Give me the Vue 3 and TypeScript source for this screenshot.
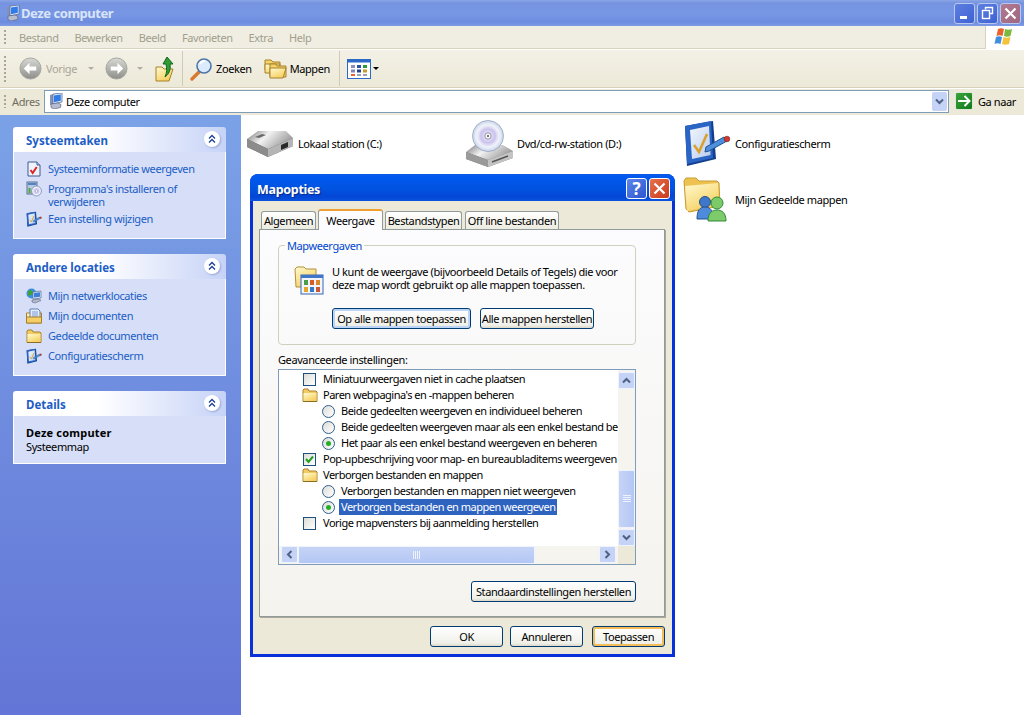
<script setup lang="ts">
interface Task {
  icon: string
  text: string
}

interface Row {
  kind: 'check' | 'radio' | 'folder'
  text: string
  on?: boolean
  selected?: boolean
}

const menus = ['Bestand', 'Bewerken', 'Beeld', 'Favorieten', 'Extra', 'Help']

const systemTasks: Task[] = [
  { icon: '#i-info', text: 'Systeeminformatie weergeven' },
  { icon: '#i-install', text: "Programma's installeren of verwijderen" },
  { icon: '#i-panel', text: 'Een instelling wijzigen' },
]

const otherPlaces: Task[] = [
  { icon: '#i-network', text: 'Mijn netwerklocaties' },
  { icon: '#i-docs', text: 'Mijn documenten' },
  { icon: '#i-folder', text: 'Gedeelde documenten' },
  { icon: '#i-panel', text: 'Configuratiescherm' },
]

const rows: Row[] = [
  { kind: 'check', text: 'Miniatuurweergaven niet in cache plaatsen' },
  { kind: 'folder', text: "Paren webpagina's en -mappen beheren" },
  { kind: 'radio', text: 'Beide gedeelten weergeven en individueel beheren' },
  { kind: 'radio', text: 'Beide gedeelten weergeven maar als een enkel bestand beheren' },
  { kind: 'radio', text: 'Het paar als een enkel bestand weergeven en beheren', on: true },
  { kind: 'check', text: 'Pop-upbeschrijving voor map- en bureaubladitems weergeven', on: true },
  { kind: 'folder', text: 'Verborgen bestanden en mappen' },
  { kind: 'radio', text: 'Verborgen bestanden en mappen niet weergeven' },
  { kind: 'radio', text: 'Verborgen bestanden en mappen weergeven', on: true, selected: true },
  { kind: 'check', text: 'Vorige mapvensters bij aanmelding herstellen' },
]

const tabs = ['Algemeen', 'Weergave', 'Bestandstypen', 'Off line bestanden']
</script>

<template>
  <div class="window">
    <svg class="defs" width="0" height="0">
      <defs>
        <linearGradient id="g-folder" x1="0" y1="0" x2="0.6" y2="1">
          <stop offset="0" stop-color="#fffad0" />
          <stop offset="1" stop-color="#f6d060" />
        </linearGradient>
        <linearGradient id="g-grey" x1="0" y1="0" x2="0" y2="1">
          <stop offset="0" stop-color="#d8d8d4" />
          <stop offset="1" stop-color="#8e8e8a" />
        </linearGradient>
        <linearGradient id="g-disk" x1="0" y1="0" x2="1" y2="0.4">
          <stop offset="0" stop-color="#777" />
          <stop offset="0.45" stop-color="#f2f2f2" />
          <stop offset="1" stop-color="#9c9c9c" />
        </linearGradient>
        <linearGradient id="g-pane" x1="0" y1="0" x2="1" y2="1">
          <stop offset="0" stop-color="#f2f6fd" />
          <stop offset="1" stop-color="#b9cdee" />
        </linearGradient>
        <radialGradient id="g-cd" cx="0.5" cy="0.5" r="0.55">
          <stop offset="0.1" stop-color="#f6ecf8" />
          <stop offset="0.4" stop-color="#c9c2ee" />
          <stop offset="0.65" stop-color="#f0f3f9" />
          <stop offset="1" stop-color="#bccbe6" />
        </radialGradient>
      </defs>
      <symbol id="i-monitor" viewBox="0 0 16 16">
        <path d="M2 2l3-1v10l-3 1z" fill="#8492bb" />
        <path d="M5 1l9-1v9l-9 2z" fill="#dfe9f8" stroke="#5a6d9a" stroke-width=".8" />
        <path d="M6 2.500l6.800-1v6.300L6 9.300z" fill="#2f7be8" />
        <path d="M3 11l7-1 3 1.500-.5 3L6 16l-3-1.500z" fill="#b7bdd0" stroke="#5d6685" stroke-width=".7" />
      </symbol>
      <symbol id="i-info" viewBox="0 0 16 16">
        <path d="M2 1h9l3 3v11H2z" fill="#eef3fb" stroke="#3f5a94" />
        <path d="M11 1v3h3" fill="#c6d4ec" stroke="#3f5a94" />
        <path d="M4.500 9l2.200 3 4-6" fill="none" stroke="#d8272a" stroke-width="2" />
      </symbol>
      <symbol id="i-install" viewBox="0 0 16 16">
        <rect x="1" y="1" width="10" height="12" fill="#b7c8df" stroke="#5d7192" />
        <rect x="2" y="2" width="8" height="2" fill="#4d84c9" />
        <rect x="2.500" y="7" width="2" height="5" fill="#46a83f" />
        <rect x="5" y="9" width="2" height="3" fill="#e2a72e" />
        <circle cx="10.500" cy="10" r="5" fill="url(#g-cd)" stroke="#7f88b8" stroke-width=".7" />
        <circle cx="10.500" cy="10" r="1.200" fill="#fff" stroke="#7f88b8" stroke-width=".5" />
      </symbol>
      <symbol id="i-panel" viewBox="0 0 48 48">
        <path d="M2 7l28-5 3 38-29 7z" fill="#123f8c" />
        <path d="M2 7l26-5 2 37-26 6z" fill="#2a64c4" />
        <path d="M7 11l19-4 1.500 29L9 40z" fill="url(#g-pane)" />
        <path d="M11 26l5 7 8-18" fill="none" stroke="#d9a02b" stroke-width="2.600" />
        <path d="M23 28l18-10 3 4-18 10-4 1z" fill="#4b8fdd" stroke="#23508f" />
        <circle cx="44" cy="20" r="2.800" fill="#cf3b2e" stroke="#7a1c14" stroke-width=".6" />
      </symbol>
      <symbol id="i-network" viewBox="0 0 16 16">
        <circle cx="5.500" cy="5.500" r="5" fill="#3f8fdd" />
        <path d="M2 3l4-1 1 3-3 3-2-1zM7 7l2 1-1 2-1-1z" fill="#3fa33a" />
        <path d="M7 4l8-1v7l-8 1z" fill="#dfe9f8" stroke="#5a6d9a" stroke-width=".7" />
        <path d="M8 5l6-.8v4.600L8 9.600z" fill="#3b7fd8" />
        <path d="M6 12l7-1 2 1.500-6 2.500-3-1z" fill="#b5bacb" stroke="#5d6685" stroke-width=".6" />
      </symbol>
      <symbol id="i-docs" viewBox="0 0 16 16">
        <path d="M.5 5h15v10H.5z" fill="url(#g-folder)" stroke="#a8802a" />
        <path d="M4 1h8l2 2v8H4z" fill="#e6eefb" stroke="#5f7fb5" />
        <path d="M6 4h6M6 6h6M6 8h6" stroke="#7c9ad0" />
        <path d="M.5 9h15v6H.5z" fill="#f5cf66" stroke="#a8802a" />
      </symbol>
      <symbol id="i-folder" viewBox="0 0 16 16">
        <path d="M1 4.500V3l1-1h4l1 2h7l1 1v9.500H1z" fill="#f2cc62" stroke="#a8802a" />
        <path d="M1.500 6h13v8h-13z" fill="url(#g-folder)" />
        <path d="M1 14.500h14" stroke="#8b6c22" />
      </symbol>
      <symbol id="i-up" viewBox="0 0 20 26">
        <path d="M1 11h6l2 2h9l-4 12H1z" fill="url(#g-folder)" stroke="#a8802a" />
        <path d="M12 1l6 7h-3c1 6-1 10-5 13 2-4 2-9 1-13H8z" fill="#2f9b32" stroke="#12681d" />
      </symbol>
      <symbol id="i-search" viewBox="0 0 24 24">
        <path d="M10 15L3 22" stroke="#d77a2b" stroke-width="3.400" stroke-linecap="round" />
        <circle cx="15" cy="9" r="7" fill="#dcebfb" stroke="#4f75a8" stroke-width="1.600" />
        <path d="M11 7a5 5 0 0 1 5-3" fill="none" stroke="#fff" stroke-width="2" />
      </symbol>
      <symbol id="i-folders" viewBox="0 0 24 20">
        <path d="M1 3V1h6l2 2h7v8H1z" fill="#f3d268" stroke="#a8802a" />
        <path d="M1 5h15l-2 9H1z" fill="url(#g-folder)" stroke="#a8802a" />
        <path d="M6 7V5h6l1 2h9v11H6z" fill="#f3d268" stroke="#a8802a" />
        <path d="M6 9h16l-3 10H6z" fill="url(#g-folder)" stroke="#a8802a" />
      </symbol>
    </svg>

    <header class="titlebar">
      <svg class="icon16"><use href="#i-monitor" /></svg>
      <span class="title">Deze computer</span>
      <div class="controls">
        <span class="ctl">
          <svg width="19" height="19" viewBox="0 0 19 19"><rect x="5" y="12" width="7" height="3" fill="#fff" /></svg>
        </span>
        <span class="ctl">
          <svg width="19" height="19" viewBox="0 0 19 19">
            <path d="M7.500 5.500V3.500h7v6h-2.500" fill="none" stroke="#fff" stroke-width="1.400" />
            <rect x="4.500" y="6.500" width="7" height="8" fill="none" stroke="#fff" stroke-width="1.400" />
          </svg>
        </span>
        <span class="ctl close">
          <svg width="19" height="19" viewBox="0 0 19 19"><path d="M4.500 4.500l10 10M14.500 4.500l-10 10" stroke="#fff" stroke-width="2.200" /></svg>
        </span>
      </div>
    </header>

    <div class="menubar">
      <i class="grip" />
      <span v-for="m in menus" :key="m" class="menu">{{ m }}</span>
      <div class="logo">
        <svg width="22" height="20" viewBox="0 0 22 20">
          <path d="M4 2c2-1 4-1 6 0L8.500 9c-2-1-4-1-6 0z" fill="#e8622c" />
          <path d="M11 2c2 1 5 1 7 0l-1.500 7c-2 1-5 1-6.500 0z" fill="#79b93c" />
          <path d="M2 10c2-1 4-1 6 0l-1.500 7c-2-1-4-1-6 0z" fill="#3f8ede" />
          <path d="M9.500 10c2 1 4 1 7 0L15 17c-2 1-5 1-7 0z" fill="#f3c33b" />
        </svg>
      </div>
    </div>

    <div class="toolbar">
      <i class="grip tall" />
      <svg class="nav" width="23" height="23" viewBox="0 0 24 24">
        <circle cx="12" cy="12" r="11" fill="url(#g-grey)" stroke="#a5a5a0" />
        <path d="M11 6l-6 6 6 6v-4h7v-4h-7z" fill="#fff" />
      </svg>
      <span class="tool-text faded vorige">Vorige</span>
      <i class="caret faded-caret" />
      <svg class="nav forward" width="23" height="23" viewBox="0 0 24 24">
        <circle cx="12" cy="12" r="11" fill="url(#g-grey)" stroke="#a5a5a0" />
        <path d="M13 6l6 6-6 6v-4H6v-4h7z" fill="#fff" />
      </svg>
      <i class="caret faded-caret second" />
      <svg class="up" width="20" height="26"><use href="#i-up" /></svg>
      <i class="tool-sep" />
      <svg class="search" width="24" height="24"><use href="#i-search" /></svg>
      <span class="tool-text zoeken">Zoeken</span>
      <svg class="folders" width="24" height="20"><use href="#i-folders" /></svg>
      <span class="tool-text mappen">Mappen</span>
      <i class="tool-sep sep2" />
      <svg class="views" width="24" height="20" viewBox="0 0 24 20">
        <rect x=".5" y=".5" width="23" height="19" fill="#fff" stroke="#2a6ac6" />
        <rect x=".5" y=".5" width="23" height="3" fill="#2a6ac6" />
        <rect x="4" y="6" width="4" height="3" fill="#8a8fc0" />
        <rect x="10" y="6" width="4" height="3" fill="#2b4fa8" />
        <rect x="16" y="6" width="4" height="3" fill="#2e9a3c" />
        <rect x="4" y="10.500" width="4" height="3" fill="#7d86b8" />
        <rect x="10" y="10.500" width="4" height="3" fill="#1f3f8f" />
        <rect x="16" y="10.500" width="4" height="3" fill="#c69a26" />
        <rect x="4" y="15" width="4" height="2" fill="#e8632c" />
        <rect x="10" y="15" width="4" height="2" fill="#99a0b8" />
        <rect x="16" y="15" width="4" height="2" fill="#99a0b8" />
      </svg>
      <i class="caret dark" />
    </div>

    <div class="addressbar">
      <i class="grip short" />
      <span class="adres">Adres</span>
      <div class="field">
        <svg class="icon16"><use href="#i-monitor" /></svg>
        <span>Deze computer</span>
        <span class="drop">
          <svg width="9" height="7" viewBox="0 0 9 7"><path d="M1 1.500l3.500 3.500L8 1.500" fill="none" stroke="#4d6185" stroke-width="2" /></svg>
        </span>
      </div>
      <span class="go">
        <svg width="14" height="12" viewBox="0 0 14 12"><path d="M1 6h11M7.500 1l5 5-5 5" fill="none" stroke="#fff" stroke-width="2" /></svg>
      </span>
      <span class="go-text">Ga naar</span>
    </div>

    <div class="main">
      <aside class="sidebar">
        <section class="panel">
          <div class="panel-head">
            <span>Systeemtaken</span>
            <span class="chev"><svg width="10" height="10" viewBox="0 0 10 10"><path d="M2 4.500l3-3 3 3M2 8.500l3-3 3 3" fill="none" stroke="#1c3f94" stroke-width="1.300" /></svg></span>
          </div>
          <div class="panel-body">
            <a v-for="t in systemTasks" :key="t.text" class="task">
              <svg class="icon16"><use :href="t.icon" /></svg>
              <span class="task-text">{{ t.text }}</span>
            </a>
          </div>
        </section>
        <section class="panel">
          <div class="panel-head">
            <span>Andere locaties</span>
            <span class="chev"><svg width="10" height="10" viewBox="0 0 10 10"><path d="M2 4.500l3-3 3 3M2 8.500l3-3 3 3" fill="none" stroke="#1c3f94" stroke-width="1.300" /></svg></span>
          </div>
          <div class="panel-body">
            <a v-for="t in otherPlaces" :key="t.text" class="task">
              <svg class="icon16"><use :href="t.icon" /></svg>
              <span class="task-text">{{ t.text }}</span>
            </a>
          </div>
        </section>
        <section class="panel">
          <div class="panel-head">
            <span>Details</span>
            <span class="chev"><svg width="10" height="10" viewBox="0 0 10 10"><path d="M2 4.500l3-3 3 3M2 8.500l3-3 3 3" fill="none" stroke="#1c3f94" stroke-width="1.300" /></svg></span>
          </div>
          <div class="panel-body details">
            <strong>Deze computer</strong>
            <span>Systeemmap</span>
          </div>
        </section>
      </aside>

      <section class="content">
        <div class="item">
          <svg class="big" viewBox="0 0 48 48">
            <path d="M1 20v8l21 10 25-11v-8z" fill="#5f5f5f" />
            <path d="M1 20l11-8h28l7 7-25 11z" fill="url(#g-disk)" />
            <path d="M1 20l21 10v8L1 28z" fill="#8c8c8c" />
            <path d="M22 30l25-11v8L22 38z" fill="#b5b5b5" />
            <path d="M35 26l7-3v5l-7 3z" fill="#2a2a2a" />
            <path d="M9 18l7-3 4 1-7 3z" fill="#6a6a6a" />
          </svg>
          <span>Lokaal station (C:)</span>
        </div>
        <div class="item">
          <svg class="big" viewBox="0 0 48 48">
            <path d="M1 33v7l22 8 25-9v-7z" fill="#777" />
            <path d="M1 33l9-7h28l10 6-25 9z" fill="url(#g-disk)" />
            <path d="M1 33l22 8v7L1 40z" fill="#9a9a9a" />
            <path d="M23 41l25-9v7l-25 9z" fill="#c4c4c4" />
            <path d="M27 43l16-6" stroke="#555" stroke-width="1.500" />
            <circle cx="23" cy="17" r="15.500" fill="url(#g-cd)" stroke="#8d98b8" stroke-width=".7" />
            <circle cx="23" cy="17" r="3.200" fill="#fff" stroke="#8d8da8" />
            <circle cx="23" cy="17" r="1.200" fill="#777" />
          </svg>
          <span>Dvd/cd-rw-station (D:)</span>
        </div>
        <div class="item">
          <svg class="big"><use href="#i-panel" /></svg>
          <span>Configuratiescherm</span>
        </div>
        <div class="item" />
        <div class="item" />
        <div class="item">
          <svg class="big" viewBox="0 0 48 48">
            <path d="M1 6l2-3h10l3 3h18l2 2 1 23-31 6-3-3z" fill="#eec24f" stroke="#c79b35" />
            <path d="M2 11l33-3 1 22-32 6z" fill="url(#g-folder)" />
            <circle cx="22" cy="27" r="5.500" fill="#3f78c9" stroke="#23508f" />
            <path d="M14 44c0-9 3-12 8-12s8 3 8 12z" fill="#4f8bdd" stroke="#23508f" />
            <circle cx="34" cy="28" r="6" fill="#7ccb68" stroke="#2e8b3a" />
            <path d="M25 46c0-8 4-11 9-11s9 3 9 11z" fill="#7ecb6b" stroke="#2e8b3a" />
          </svg>
          <span>Mijn Gedeelde mappen</span>
        </div>
      </section>

      <div class="dialog">
        <div class="dlg-title">
          <span class="dlg-name">Mapopties</span>
          <div class="dlg-controls">
            <span class="dctl help">?</span>
            <span class="dctl red">
              <svg width="15" height="15" viewBox="0 0 15 15"><path d="M2.500 2.500l10 10M12.500 2.500l-10 10" stroke="#fff" stroke-width="2.200" /></svg>
            </span>
          </div>
        </div>
        <div class="dlg-body">
          <div class="tabs">
            <span v-for="t in tabs" :key="t" class="tab" :class="{ active: t === 'Weergave' }">{{ t }}</span>
          </div>
          <div class="tab-page">
            <div class="group">
              <span class="legend">Mapweergaven</span>
              <div class="group-text">
                <svg class="group-icon" width="30" height="30" viewBox="0 0 30 30">
                  <path d="M1 4l2-2h7l2 2h10v18H2z" fill="url(#g-folder)" stroke="#b0913e" />
                  <rect x="7" y="10" width="22" height="19" fill="#f2f6fc" stroke="#3566b3" />
                  <rect x="7" y="10" width="22" height="3" fill="#3f76c8" />
                  <rect x="10" y="15" width="4" height="5" fill="#4aa04a" />
                  <rect x="16" y="15" width="4" height="5" fill="#d85b2a" />
                  <rect x="22" y="15" width="4" height="5" fill="#d88a2a" />
                  <rect x="10" y="22" width="4" height="5" fill="#e5a72a" />
                  <rect x="16" y="22" width="4" height="5" fill="#2f7cc8" />
                  <rect x="22" y="22" width="4" height="5" fill="#c9573a" />
                </svg>
                <p>U kunt de weergave (bijvoorbeeld Details of Tegels) die voor<br />deze map wordt gebruikt op alle mappen toepassen.</p>
              </div>
              <div class="group-btns">
                <button class="xp-btn focus wide1" type="button">Op alle mappen toepassen</button>
                <button class="xp-btn wide2" type="button">Alle mappen herstellen</button>
              </div>
            </div>
            <div class="adv-label">Geavanceerde instellingen:</div>
            <div class="list">
              <div class="list-main">
                <div class="rows">
                  <div v-for="r in rows" :key="r.text" class="row" :class="'row-' + r.kind">
                    <span v-if="r.kind === 'check'" class="checkbox">
                      <svg v-if="r.on" width="11" height="11" viewBox="0 0 11 11"><path d="M2 5l2.500 3L9 2.500" fill="none" stroke="#21a121" stroke-width="2" /></svg>
                    </span>
                    <svg v-else-if="r.kind === 'folder'" class="icon16"><use href="#i-folder" /></svg>
                    <span v-else class="radio"><i v-if="r.on" /></span>
                    <span class="row-text" :class="{ selected: r.selected }">{{ r.text }}</span>
                  </div>
                </div>
                <div class="vscroll">
                  <span class="sb-btn">
                    <svg width="9" height="7" viewBox="0 0 9 7"><path d="M1 5.500L4.500 2 8 5.500" fill="none" stroke="#4d6185" stroke-width="2" /></svg>
                  </span>
                  <span class="sb-track">
                    <span class="sb-thumb v">
                      <svg width="8" height="8" viewBox="0 0 8 8"><path d="M0 .5h8M0 2.500h8M0 4.500h8M0 6.500h8" stroke="#eef3fe" /></svg>
                    </span>
                  </span>
                  <span class="sb-btn">
                    <svg width="9" height="7" viewBox="0 0 9 7"><path d="M1 1.500L4.500 5 8 1.500" fill="none" stroke="#4d6185" stroke-width="2" /></svg>
                  </span>
                </div>
              </div>
              <div class="hscroll">
                <span class="sb-btn">
                  <svg width="7" height="9" viewBox="0 0 7 9"><path d="M5.500 1L2 4.500 5.500 8" fill="none" stroke="#4d6185" stroke-width="2" /></svg>
                </span>
                <span class="sb-track h">
                  <span class="sb-thumb h">
                    <svg width="8" height="8" viewBox="0 0 8 8"><path d="M.5 0v8M2.500 0v8M4.500 0v8M6.500 0v8" stroke="#eef3fe" /></svg>
                  </span>
                </span>
                <span class="sb-btn">
                  <svg width="7" height="9" viewBox="0 0 7 9"><path d="M1.500 1L5 4.500 1.500 8" fill="none" stroke="#4d6185" stroke-width="2" /></svg>
                </span>
                <span class="sb-corner" />
              </div>
            </div>
            <div class="defaults">
              <button class="xp-btn wide3" type="button">Standaardinstellingen herstellen</button>
            </div>
          </div>
          <div class="dlg-buttons">
            <button class="xp-btn ok" type="button">OK</button>
            <button class="xp-btn cancel" type="button">Annuleren</button>
            <button class="xp-btn apply default" type="button">Toepassen</button>
          </div>
        </div>
      </div>
    </div>
  </div>
</template>

<style>
html,
body {
  margin: 0;
  background: #fff;
}
</style>

<style scoped>
.window {
  width: 1024px;
  height: 715px;
  overflow: hidden;
  display: flex;
  flex-direction: column;
  position: relative;
  font-family: "Noto Sans", sans-serif;
  font-size: 11px;
  letter-spacing: -0.4px;
  color: #000;
  background: #fff;
}

.defs {
  position: absolute;
}

.icon16 {
  width: 16px;
  height: 16px;
  flex: none;
}

.titlebar {
  height: 26px;
  flex: none;
  display: flex;
  align-items: center;
  padding: 0 3px 0 5px;
  background: linear-gradient(180deg, #8aa6e6 0, #7593e0 12%, #7797e4 55%, #6d8cde 85%, #7f9ce6 100%);
}

.title {
  color: #d9e4f8;
  font-weight: 700;
  font-size: 13px;
  letter-spacing: -0.45px;
}

.controls {
  margin-left: auto;
  display: flex;
  gap: 2px;
}

.ctl {
  width: 19px;
  height: 19px;
  border: 1px solid #b9c8ef;
  border-radius: 3px;
  background: linear-gradient(135deg, #5d7fe0, #3f62d4);
  display: block;
}

.ctl.close {
  background: linear-gradient(135deg, #b27a92, #9f6780);
}

.ctl svg {
  display: block;
}

.menubar {
  height: 23px;
  box-sizing: border-box;
  flex: none;
  display: flex;
  align-items: center;
  padding-left: 4px;
  background: #f0eee2;
  border-bottom: 1px solid #d8d2bd;
  box-shadow: 0 1px 0 #fff;
  position: relative;
  color: #a19e8d;
}

.grip {
  width: 2px;
  height: 15px;
  flex: none;
  background: repeating-linear-gradient(180deg, #a8a695 0 2px, transparent 2px 4px);
}

.grip.tall {
  height: 26px;
}

.grip.short {
  height: 13px;
}

.menu {
  margin-left: 16px;
}

.menu:first-of-type {
  margin-left: 13px;
}

.logo {
  margin-left: auto;
  width: 39px;
  height: 23px;
  box-sizing: border-box;
  background: #fff;
  border-left: 1px solid #d8d2bd;
  display: flex;
  align-items: center;
  justify-content: center;
}

.toolbar {
  height: 38px;
  box-sizing: border-box;
  flex: none;
  margin-top: 1px;
  display: flex;
  align-items: center;
  padding-left: 4px;
  background: linear-gradient(180deg, #f3f1e6, #ece9d8);
  border-bottom: 1px solid #d8d2bd;
  box-shadow: 0 1px 0 #fff;
}

.nav {
  margin-left: 13px;
}

.nav.forward {
  margin-left: 11px;
}

.tool-text {
  margin-left: 4px;
  white-space: nowrap;
}

.faded {
  color: #a8a698;
}

.vorige {
  margin-left: 4px;
}

.mappen {
  margin-left: 2px;
}

.caret {
  width: 0;
  height: 0;
  border: 3px solid transparent;
  border-top: 3px solid #000;
  border-bottom: 0;
  margin-left: 11px;
}

.caret.faded-caret {
  border-top-color: #b0ae9f;
}

.caret.second {
  margin-left: 9px;
}

.caret.dark {
  margin-left: 2px;
}

.up {
  margin-left: 12px;
}

.tool-sep {
  width: 1px;
  height: 35px;
  background: #cfcab6;
  margin-left: 7px;
  flex: none;
}

.search {
  margin-left: 6px;
}

.zoeken {
  margin-left: 3px;
  margin-right: 12px;
}

.sep2 {
  margin-left: 9px;
}

.views {
  margin-left: 7px;
}

.addressbar {
  height: 26px;
  box-sizing: border-box;
  flex: none;
  margin-top: 1px;
  display: flex;
  align-items: center;
  padding: 0 0 2px 4px;
  background: #ece9d8;
}

.adres {
  margin-left: 6px;
  width: 32px;
  color: #6e6c60;
}

.field {
  width: 905px;
  height: 23px;
  box-sizing: border-box;
  border: 1px solid #7f9db9;
  background: #fff;
  display: flex;
  align-items: center;
  gap: 2px;
  padding-left: 3px;
}

.drop {
  margin-left: auto;
  margin-right: 1px;
  width: 15px;
  height: 19px;
  background: #c5d3f6;
  border-radius: 2px;
  display: flex;
  align-items: center;
  justify-content: center;
}

.go {
  margin-left: 6px;
  width: 18px;
  height: 18px;
  border-radius: 2px;
  background: linear-gradient(135deg, #3aa33a, #0f7a1c);
  border: 1px solid #dfe8d8;
  box-sizing: border-box;
  display: flex;
  align-items: center;
  justify-content: center;
}

.go-text {
  margin-left: 5px;
}

.main {
  flex: 1;
  display: flex;
  min-height: 0;
}

.sidebar {
  width: 241px;
  flex: none;
  box-sizing: border-box;
  padding: 12px 15px 0 13px;
  background: linear-gradient(180deg, #7ba2e7, #6375d6);
  display: flex;
  flex-direction: column;
  gap: 15px;
}

.panel-head {
  height: 25px;
  box-sizing: border-box;
  display: flex;
  align-items: center;
  justify-content: space-between;
  padding: 2px 6px 0 13px;
  border-radius: 3px 3px 0 0;
  background: linear-gradient(90deg, #fff 40%, #c6d3f7);
  color: #215dc6;
  font-weight: 700;
  font-size: 11.5px;
  letter-spacing: 0;
}

.chev {
  width: 16px;
  height: 16px;
  margin-top: -4px;
  border-radius: 50%;
  background: #fff;
  box-shadow: 1px 1px 2px #9aa9d6;
  display: flex;
  align-items: center;
  justify-content: center;
}

.panel-body {
  background: #d6dff7;
  border: 1px solid #fff;
  border-top: 0;
  padding: 9px 12px 11px;
  display: flex;
  flex-direction: column;
  gap: 4px;
}

.task {
  display: flex;
  gap: 6px;
  color: #215dc6;
  line-height: 13px;
  min-height: 16px;
}

.task-text {
  padding-top: 1px;
  margin-bottom: -1px;
}

.details {
  padding: 10px 12px 10px;
  gap: 0;
  line-height: 13.500px;
}

.details strong {
  letter-spacing: 0.2px;
}

.content {
  flex: 1;
  display: grid;
  grid-template-columns: 219px 218px 200px;
  grid-auto-rows: 56px;
  align-content: start;
  padding: 0 0 0 5px;
}

.item {
  display: flex;
  align-items: center;
  gap: 4px;
}

.big {
  width: 48px;
  height: 48px;
  flex: none;
}

.dialog {
  position: absolute;
  left: 250px;
  top: 174px;
  width: 425px;
  height: 483px;
  box-sizing: border-box;
  display: flex;
  flex-direction: column;
  border-radius: 8px 8px 0 0;
  background: #0831d9;
}

.dlg-title {
  height: 27px;
  flex: none;
  box-sizing: border-box;
  display: flex;
  align-items: center;
  justify-content: space-between;
  padding: 2px 5px 0 7px;
  border-radius: 8px 8px 0 0;
  background: linear-gradient(180deg, #0a5ae8 0, #0058ee 12%, #0053e0 55%, #0546d6 85%, #0a55e0 100%);
  color: #fff;
  font-weight: 700;
  font-size: 12.5px;
  letter-spacing: -0.3px;
  text-shadow: 1px 1px 1px #0a2a8c;
}

.dlg-name {
  padding-top: 2px;
}

.dlg-controls {
  display: flex;
  gap: 2px;
}

.dctl {
  width: 19px;
  height: 19px;
  border: 1px solid #fff;
  border-radius: 3px;
  display: flex;
  align-items: center;
  justify-content: center;
  font-size: 17px;
  font-weight: 700;
  text-shadow: none;
}

.help {
  background: linear-gradient(135deg, #5d86ea, #2d55cf);
}

.red {
  background: linear-gradient(135deg, #e8714c, #c93a1c);
}

.dlg-body {
  flex: 1;
  margin: 0 3px 3px;
  background: #ece9d8;
  padding: 8px 7px 0 6px;
  display: flex;
  flex-direction: column;
}

.tabs {
  display: flex;
  gap: 2px;
  padding-left: 2px;
  height: 20px;
  align-items: flex-end;
  position: relative;
  z-index: 1;
}

.tab {
  height: 18px;
  box-sizing: border-box;
  padding: 1px 0 0;
  border: 1px solid #919b9c;
  border-bottom: 0;
  border-radius: 3px 3px 0 0;
  background: linear-gradient(180deg, #fff, #ecebe0);
  white-space: nowrap;
  line-height: 15px;
  text-align: center;
}

.tab:nth-child(1) {
  width: 55px;
}

.tab:nth-child(2) {
  width: 65px;
}

.tab:nth-child(3) {
  width: 77px;
}

.tab:nth-child(4) {
  width: 94px;
  margin-left: 1px;
}

.tab.active {
  height: 21px;
  padding: 2px 0 0;
  margin: 0 0 -1px;
  background: #fcfcfe;
  border-top: 2px solid #f0a030;
  border-bottom: 0;
}

.tab-page {
  height: 388px;
  box-sizing: border-box;
  border: 1px solid #919b9c;
  background: linear-gradient(180deg, #fcfcfe, #f4f3ee);
  padding: 15px 28px 0 18px;
  box-shadow: 1px 1px 0 #aca899;
  display: flex;
  flex-direction: column;
}

.group {
  height: 100px;
  box-sizing: border-box;
  border: 1px solid #d0d0bf;
  border-radius: 4px;
  position: relative;
  padding: 19px 8px 0 15px;
}

.legend {
  position: absolute;
  left: 6px;
  top: -7px;
  padding: 0 2px;
  background: #fbfbf8;
  color: #0046d5;
  line-height: 13px;
}

.group-text {
  display: flex;
  gap: 8px;
  align-items: flex-start;
}

.group-icon {
  flex: none;
}

.group-text p {
  margin: 0;
  line-height: 13px;
  white-space: nowrap;
}

.group-btns {
  display: flex;
  gap: 9px;
  padding-left: 38px;
  margin-top: 13px;
}

.xp-btn {
  height: 21px;
  box-sizing: border-box;
  border: 1px solid #003c74;
  border-radius: 3px;
  background: linear-gradient(180deg, #fff, #f0f0ea 85%, #dcd8c8);
  font: inherit;
  letter-spacing: inherit;
  color: #000;
  padding: 0;
  white-space: nowrap;
}

.xp-btn.focus {
  box-shadow: inset 0 0 0 2px #bcd4f6;
}

.xp-btn.default {
  box-shadow: inset 0 0 0 2px #f5bc5a;
}

.wide1 {
  width: 139px;
}

.wide2 {
  width: 114px;
}

.wide3 {
  width: 165px;
}

.adv-label {
  margin-top: 8px;
  line-height: 13px;
}

.list {
  margin-top: 3px;
  height: 196px;
  box-sizing: border-box;
  border: 1px solid #7f9db9;
  background: #fff;
  display: flex;
  flex-direction: column;
}

.list-main {
  flex: 1;
  min-height: 0;
  display: flex;
}

.rows {
  flex: 1;
  min-width: 0;
  overflow: hidden;
  padding-top: 1px;
  letter-spacing: -0.5px;
}

.row {
  height: 16px;
  display: flex;
  align-items: center;
  white-space: nowrap;
  padding-left: 24px;
}

.row-folder {
  padding-left: 23px;
}

.row-radio {
  padding-left: 43px;
}

.row-text {
  padding: 0 2px;
  line-height: 16px;
}

.row-text.selected {
  background: #2f63c0;
  color: #fff;
}

.checkbox {
  width: 13px;
  height: 13px;
  box-sizing: border-box;
  border: 1px solid #1c5180;
  background: linear-gradient(135deg, #dcdcd7, #fff);
  margin-right: 5px;
  flex: none;
  display: flex;
  align-items: center;
  justify-content: center;
}

.radio {
  width: 13px;
  height: 13px;
  box-sizing: border-box;
  border: 1px solid #2f5f8f;
  border-radius: 50%;
  background: linear-gradient(135deg, #dcdcd7, #fff);
  margin-right: 4px;
  flex: none;
  display: flex;
  align-items: center;
  justify-content: center;
}

.radio i {
  width: 5px;
  height: 5px;
  border-radius: 50%;
  background: #24b024;
}

.row-folder .icon16 {
  margin-right: 3px;
}

.vscroll {
  width: 17px;
  flex: none;
  display: flex;
  flex-direction: column;
  background: #f5f4ee;
  padding-top: 2px;
}

.sb-btn {
  width: 17px;
  height: 17px;
  flex: none;
  box-sizing: border-box;
  border: 1px solid #eef3fe;
  border-radius: 2px;
  background: #c5d3f6;
  display: flex;
  align-items: center;
  justify-content: center;
}

.sb-track {
  flex: 1;
  display: flex;
  flex-direction: column;
  justify-content: flex-end;
}

.sb-track.h {
  flex-direction: row;
  justify-content: flex-start;
}

.sb-thumb {
  box-sizing: border-box;
  border: 1px solid #eef3fe;
  border-radius: 2px;
  background: linear-gradient(90deg, #c5d3f6, #b4c7f4);
  display: flex;
  align-items: center;
  justify-content: center;
}

.sb-thumb.v {
  height: 58px;
  margin-bottom: 1px;
}

.sb-thumb.h {
  width: 237px;
  background: linear-gradient(180deg, #c5d3f6, #b4c7f4);
}

.hscroll {
  height: 18px;
  flex: none;
  display: flex;
  padding-left: 2px;
  background: #f5f4ee;
}

.sb-corner {
  width: 17px;
  margin-left: 2px;
  background: #ece9d8;
}

.defaults {
  display: flex;
  justify-content: flex-end;
  margin-top: 16px;
}

.dlg-buttons {
  display: flex;
  justify-content: flex-end;
  gap: 7px;
  margin-top: 9px;
}

.ok,
.cancel,
.apply {
  width: 73px;
}

.apply {
  margin-left: 2px;
}
</style>
